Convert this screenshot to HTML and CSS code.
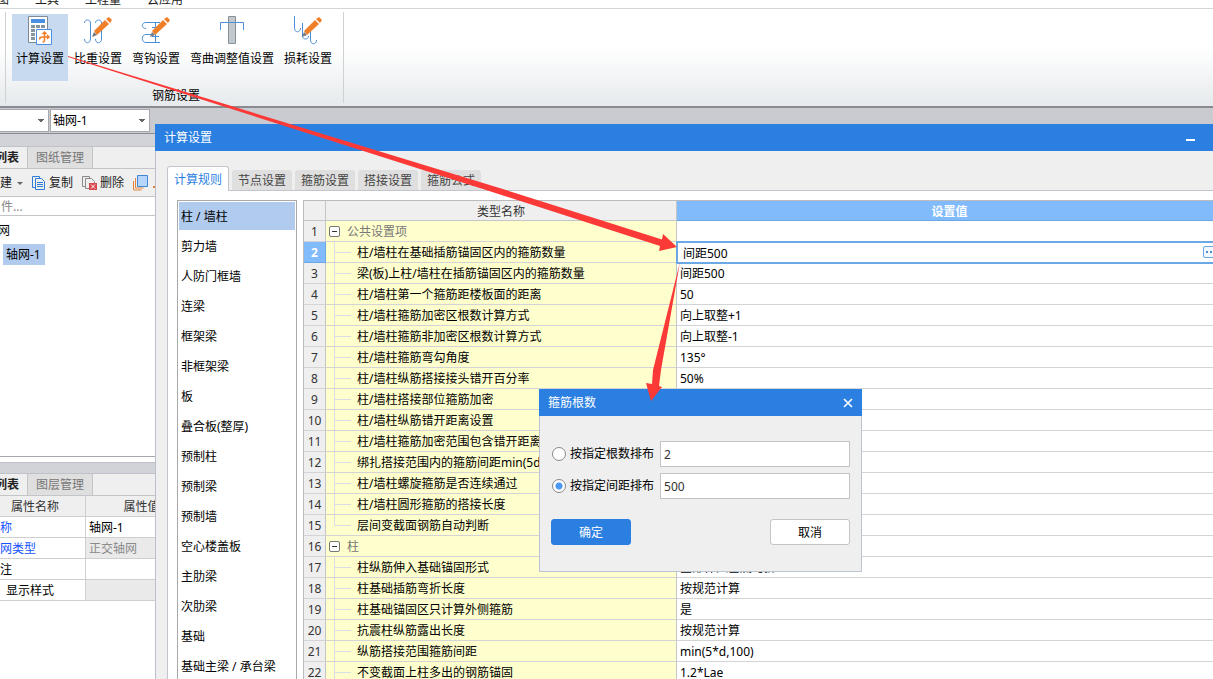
FILE: index.html
```html
<!DOCTYPE html>
<html lang="zh-CN">
<head>
<meta charset="utf-8">
<title>计算设置</title>
<link rel="stylesheet" href="styles.css">
</head>
<body>
<div class="app">
  <nav class="menu">
    <a href="#">图</a><a href="#">工具</a><a href="#">工程量</a><a href="#">云应用</a>
  </nav>
  <section class="ribbon">
    <div class="group">
      <div class="tools">
        <button class="tool active">
          <svg width="32" height="32" viewBox="0 0 32 32" fill="none">
            <path d="M4.500 2.500h19v26h-19z" fill="#fff" stroke="#7d8a94"/>
            <path d="M7 5h14v4H7z" fill="#4a90e2"/>
            <path d="M7 11h4v3H7zm5 0h4v3h-4zm5 0h4v3h-4zM7 15h4v3H7zM7 19h4v3H7zM7 23h4v3H7z" fill="#87939d"/>
            <path d="M12.500 15.500h15v15h-15z" fill="#fff" stroke="#4a90e2"/>
            <path d="M20.500 18v8q0 2-2 2M18.500 20l2-2 2 2M25 23h-7q-2.500 0-2.500 2.500M23 21l2 2-2 2" stroke="#f07f2a" stroke-width="1.500"/>
          </svg>
          <span>计算设置</span>
        </button>
        <button class="tool">
          <svg width="32" height="32" viewBox="0 0 32 32" fill="none">
            <path d="M2.500 9c0-4 6-4 6 0v16c0 5-6 5-6 0M13.500 9c0-4 6-4 6 0v16c0 5-6 5-6 0" stroke="#4a90d9"/>
            <path d="M12 17L23 6l4 4-12 11z" fill="#f07f2a"/><path d="M24 5l3-2 3 3-2 3z" fill="#f07f2a"/><path d="M10 23l2-5 3 3z" fill="#777"/>
          </svg>
          <span>比重设置</span>
        </button>
        <button class="tool">
          <svg width="32" height="32" viewBox="0 0 32 32" fill="none">
            <path d="M20 8.500H6c-5 0-5 6 0 6M20 28.500H6c-5 0-5-8 0-8h5M15.500 9v19M12 13.500h7M12 22.500h7" stroke="#4a90d9"/>
            <path d="M12 17L23 6l4 4-12 11z" fill="#f07f2a"/><path d="M24 5l3-2 3 3-2 3z" fill="#f07f2a"/><path d="M10 23l2-5 3 3z" fill="#777"/>
          </svg>
          <span>弯钩设置</span>
        </button>
        <button class="tool">
          <svg width="32" height="32" viewBox="0 0 32 32" fill="none">
            <path d="M12.500 2.500h7v27h-7z" fill="#c3c8cc" stroke="#85929b"/>
            <path d="M4.500 16V8.500h23V16" stroke="#4a90d9"/>
          </svg>
          <span>弯曲调整值设置</span>
        </button>
        <button class="tool">
          <svg width="32" height="32" viewBox="0 0 32 32" fill="none">
            <path d="M2.500 2v12c0 5 6 5 6 0M10.500 9v13c0 4 6 4 6 0M18.500 16v10c0 5 6 5 6 0" stroke="#4a90d9"/>
            <path d="M12 17L23 6l4 4-12 11z" fill="#f07f2a"/><path d="M24 5l3-2 3 3-2 3z" fill="#f07f2a"/><path d="M10 23l2-5 3 3z" fill="#777"/>
          </svg>
          <span>损耗设置</span>
        </button>
      </div>
      <div class="caption">钢筋设置</div>
    </div>
  </section>
  <div class="combos">
    <select class="combo short" aria-label="楼层"><option></option></select>
    <select class="combo" aria-label="构件"><option>轴网-1</option></select>
  </div>
  <aside class="side">
    <div class="splitter"></div>
    <div class="dock-tabs"><button class="dock on">列表</button><button class="dock">图纸管理</button></div>
    <div class="toolbar">
      <button class="new">建 <i class="caret"></i></button>
      <button><svg width="14" height="16" viewBox="0 0 14 16" fill="none" stroke="#2f7fd6"><path d="M3.500 12.500h-3V1.500h7v2M3.500 3.500h6l3 3v8h-9zM5 7.500h6M5 9.500h6M5 11.500h6"/></svg>复制</button>
      <button><svg width="15" height="16" viewBox="0 0 15 16" fill="none"><path d="M3.500 11.500h-3v-10h7v2M7 13.500H3.500v-10h6l3 3V8" stroke="#888"/><path d="M7 8h8v7H7z" fill="#d8474e"/><path d="M9 9.500l4 4m0-4l-4 4" stroke="#fff"/></svg>删除</button>
      <button aria-label="层间复制"><svg width="15" height="16" viewBox="0 0 15 16" fill="none"><path d="M.5 6v9h8M2.500 3v10h8" stroke="#e2843f"/><path d="M4.500.5h10v11h-10z" fill="#b5d5fb" stroke="#3f86d6"/></svg></button>
      <i class="dot"></i>
    </div>
    <input class="search" placeholder="件..." aria-label="搜索构件">
    <ul class="tree"><li>网</li><li><span class="picked">轴网-1</span></li></ul>
    <div class="splitter low"></div>
    <div class="dock-tabs"><button class="dock on">列表</button><button class="dock">图层管理</button></div>
    <table class="props">
      <thead><tr><th>属性名称</th><th>属性值</th></tr></thead>
      <tbody>
        <tr><td class="link">称</td><td>轴网-1</td></tr>
        <tr><td class="link">网类型</td><td class="off">正交轴网</td></tr>
        <tr><td>注</td><td></td></tr>
        <tr><td class="indent">显示样式</td><td class="off"></td></tr>
      </tbody>
    </table>
  </aside>
</div>

<section class="window">
  <header class="titlebar"><h1>计算设置</h1><button class="min" aria-label="最小化"></button></header>
  <div class="window-body">
    <div class="tabs">
      <button class="tab on">计算规则</button><button class="tab">节点设置</button><button class="tab">箍筋设置</button><button class="tab">搭接设置</button><button class="tab">箍筋公式</button>
    </div>
    <div class="panel">
      <ul class="kinds">
        <li class="on">柱 / 墙柱</li><li>剪力墙</li><li>人防门框墙</li><li>连梁</li><li>框架梁</li><li>非框架梁</li><li>板</li><li>叠合板(整厚)</li><li>预制柱</li><li>预制梁</li><li>预制墙</li><li>空心楼盖板</li><li>主肋梁</li><li>次肋梁</li><li>基础</li><li>基础主梁 / 承台梁</li>
      </ul>
      <table class="grid">
        <thead><tr><th class="num"></th><th class="name">类型名称</th><th class="value">设置值</th></tr></thead>
        <tbody>
          <tr class="head"><th>1</th><td><button class="fold" aria-label="折叠"></button>公共设置项</td><td></td></tr>
          <tr class="current"><th>2</th><td>柱/墙柱在基础插筋锚固区内的箍筋数量</td><td><div class="editor"><input value="间距500" aria-label="设置值"><button class="more" aria-label="更多"><i></i><i></i><i></i></button></div></td></tr>
          <tr><th>3</th><td>梁(板)上柱/墙柱在插筋锚固区内的箍筋数量</td><td>间距500</td></tr>
          <tr><th>4</th><td>柱/墙柱第一个箍筋距楼板面的距离</td><td>50</td></tr>
          <tr><th>5</th><td>柱/墙柱箍筋加密区根数计算方式</td><td>向上取整+1</td></tr>
          <tr><th>6</th><td>柱/墙柱箍筋非加密区根数计算方式</td><td>向上取整-1</td></tr>
          <tr><th>7</th><td>柱/墙柱箍筋弯勾角度</td><td>135°</td></tr>
          <tr><th>8</th><td>柱/墙柱纵筋搭接接头错开百分率</td><td>50%</td></tr>
          <tr><th>9</th><td>柱/墙柱搭接部位箍筋加密</td><td></td></tr>
          <tr><th>10</th><td>柱/墙柱纵筋错开距离设置</td><td></td></tr>
          <tr><th>11</th><td>柱/墙柱箍筋加密范围包含错开距离</td><td></td></tr>
          <tr><th>12</th><td>绑扎搭接范围内的箍筋间距min(5d</td><td></td></tr>
          <tr><th>13</th><td>柱/墙柱螺旋箍筋是否连续通过</td><td></td></tr>
          <tr><th>14</th><td>柱/墙柱圆形箍筋的搭接长度</td><td></td></tr>
          <tr class="last"><th>15</th><td>层间变截面钢筋自动判断</td><td></td></tr>
          <tr class="head"><th>16</th><td><button class="fold" aria-label="折叠"></button>柱</td><td></td></tr>
          <tr><th>17</th><td>柱纵筋伸入基础锚固形式</td><td>全部伸入基底弯折</td></tr>
          <tr><th>18</th><td>柱基础插筋弯折长度</td><td>按规范计算</td></tr>
          <tr><th>19</th><td>柱基础锚固区只计算外侧箍筋</td><td>是</td></tr>
          <tr><th>20</th><td>抗震柱纵筋露出长度</td><td>按规范计算</td></tr>
          <tr><th>21</th><td>纵筋搭接范围箍筋间距</td><td>min(5*d,100)</td></tr>
          <tr><th>22</th><td>不变截面上柱多出的钢筋锚固</td><td>1.2*Lae</td></tr>
        </tbody>
      </table>
    </div>
  </div>
</section>

<form class="popup">
  <header class="titlebar"><h2>箍筋根数</h2>
    <button type="button" class="close" aria-label="关闭"><svg width="10" height="10" viewBox="0 0 10 10" stroke="#fff" stroke-width="1.600"><path d="M1 1l8 8M9 1L1 9"/></svg></button>
  </header>
  <div class="fields">
    <label><input type="radio" name="mode">按指定根数排布</label><input class="text" value="2" aria-label="根数">
    <label><input type="radio" name="mode" checked>按指定间距排布</label><input class="text" value="500" aria-label="间距">
  </div>
  <footer><button type="button" class="btn primary">确定</button><button type="button" class="btn">取消</button></footer>
</form>

<svg class="arrows" width="1213" height="679" viewBox="0 0 1213 679" fill="#fb3a38">
  <path d="M68 56l438 134 156 49.500 1-5.500 14 13-18 4 1-5-174-56L68 57z"/>
  <path d="M680 262l-19 108-2 16 3 1-11 14-5-18 6 1 1-14z"/>
</svg>
</body>
</html>
```
FILE: styles.css
```css
* { box-sizing: border-box; }
body {
  margin: 0;
  min-height: 100vh;
  overflow: hidden;
  background: #fff;
  color: #000;
  font: 12px/20px "Noto Sans", "Noto Sans CJK SC", sans-serif;
}
button, input, select { font: inherit; color: inherit; margin: 0; padding: 0; border: 0; background: none; }
ul { list-style: none; margin: 0; padding: 0; }
h1, h2 { margin: 0; font-size: 12px; font-weight: 400; }
table { border-spacing: 0; table-layout: fixed; }
th { font-weight: 400; }
.app { height: 100vh; overflow: hidden; display: flex; flex-direction: column; }

/* menu and ribbon */
.menu { height: 9px; flex: none; display: flex; align-items: flex-end; gap: 26px; overflow: hidden; border-bottom: 1px solid #d5d6d8; }
.menu a { color: #222; text-decoration: none; white-space: nowrap; line-height: 16px; }
.menu a:first-child { width: 9px; display: flex; justify-content: flex-end; }
.ribbon { flex: none; height: 99px; padding: 3px 0 3px 5px; display: flex; background: linear-gradient(#fff 40%, #e6eaec); border-bottom: 2px solid #888c90; }
.group { border: 1px solid #cfd1d3; border-width: 0 1px; padding: 2px 7px 0 6px; display: flex; flex-direction: column; justify-content: space-between; }
.tools { display: flex; gap: 2px; }
.tool { height: 67px; padding: 0 4px; display: flex; flex-direction: column; align-items: center; white-space: nowrap; gap: 3px; }
.tool svg { display: block; }
.tool.active { background: #c8daf0; }
.caption { padding-left: 4px; text-align: center; line-height: 14px; }

.combos { flex: none; display: flex; gap: 1px; padding: 1px 0 2px; height: 26px; background: #c9cbd1; border-bottom: 1px solid #888c90; }
.combo {
  appearance: none;
  width: 100px;
  height: 23px;
  padding: 0 2px;
  border: 1px solid #a6a8ab;
  background-color: #fff;
  background-image: linear-gradient(#666, #666), linear-gradient(#666, #666), linear-gradient(#666, #666);
  background-size: 6px 1px, 4px 1px, 2px 1px;
  background-position: right 4px top 9px, right 5px top 10px, right 6px top 11px;
  background-repeat: no-repeat;
}
.combo.short { width: 49px; border-left: 0; }

/* docked panels */
.side { flex: 1; width: 198px; display: flex; flex-direction: column; }
.splitter { flex: none; height: 13px; background: #d1d3d9; border-bottom: 1px solid #bfc2c8; }
.splitter.low { margin-top: 5px; height: 12px; border-top: 1px solid #bfc2c8; }
.dock-tabs { flex: none; display: flex; height: 22px; background: #efefef; border-bottom: 1px solid #c4c5c9; }
.dock { padding: 1px 8px 0; background: #dfdfdf; color: #777; border-right: 1px solid #c4c5c9; white-space: nowrap; }
.dock.on { width: 28px; background: #efefef; color: #222; font-weight: 700; display: flex; justify-content: flex-end; align-items: center; }
.toolbar { flex: none; height: 28px; padding-top: 1px; display: flex; align-items: center; gap: 9px; background: #efefef; border-bottom: 1px solid #c4c5c9; color: #222; }
.toolbar button { display: flex; align-items: center; gap: 3px; white-space: nowrap; }
.caret { border: 3px solid transparent; border-top-color: #666; border-bottom: 0; margin-left: 2px; }
.dot { width: 2px; height: 2px; margin: 8px 0 0 -4px; background: #e2843f; }
.search { flex: none; height: 19px; padding: 1px 1px 0; border-bottom: 1px solid #c4c5c9; }
.search::placeholder { color: #888; opacity: 1; }
.tree { flex: none; height: 241px; padding: 2px 3px; border-bottom: 1px solid #aaa; }
.tree li { height: 24px; line-height: 26px; }
.tree li:first-child { margin-left: -5px; }
.picked { display: inline-block; line-height: 21px; padding: 0 4px 0 3px; background: #b0cbed; }
.props { width: 198px; }
.props th, .props td { height: 21px; padding: 2px 0 0; line-height: 18px; border-bottom: 1px solid #cfcfcf; border-right: 1px solid #cfcfcf; }
.props th { background: #efefef; color: #333; }
.props th:first-child { width: 86px; padding-right: 26px; text-align: right; }
.props td + td { padding-left: 3px; }
.props .link { color: #1553ff; }
.props .off { background: #eaeaea; color: #8b8b8b; }
.props .indent { padding-left: 6px; }

/* settings window */
.window { position: absolute; left: 155px; top: 124px; right: -10px; bottom: 0; display: flex; flex-direction: column; overflow: hidden; background: #efefef; }
.titlebar { flex: none; height: 27px; display: flex; align-items: center; justify-content: space-between; padding: 0 9px; background: #2b7fe1; color: #fff; }
.min { width: 9px; height: 2px; margin: 4px 19px 0 0; background: #fff; }
.window-body { flex: 1; min-height: 0; display: flex; flex-direction: column; padding: 15px 0 0 11px; border-left: 1px solid #b9c0cb; }
.tabs { flex: none; display: flex; align-items: flex-end; gap: 3px; height: 25px; position: relative; z-index: 1; }
.tab { height: 20px; padding: 2px 6px 0; margin-bottom: 1px; background: #dfdfdf; border-radius: 3px 3px 0 0; color: #444; line-height: 18px; white-space: nowrap; }
.tab.on { height: 25px; margin: 0; background: #fff; border: 1px solid #c4c5cc; border-bottom: 0; color: #2b7fe1; }
.panel { flex: 1; min-height: 0; margin-top: -1px; display: flex; align-items: flex-start; gap: 6px; padding: 9px 0 0 9px; background: #fff; border: 1px solid #c4c5cc; border-width: 1px 0 0 1px; }
.kinds { flex: none; width: 120px; min-height: 100%; padding: 1px; border: 1px solid #a9a9a9; }
.kinds li { height: 28px; margin-bottom: 2px; padding-left: 2px; line-height: 30px; white-space: nowrap; }
.kinds .on { background: #b0cbed; }
.grid { flex: 1; min-width: 0; width: 100%; border-top: 1px solid #bbb; border-left: 1px solid #bbb; }
.grid th, .grid td { height: 21px; padding: 2px 0 0; line-height: 18px; white-space: nowrap; border-right: 1px solid #c4c5c9; border-bottom: 1px solid #d4d4d6; }
.grid th { background: #efefef; color: #333; }
.grid thead th { height: 20px; line-height: 17px; border-bottom-color: #c4c5c9; }
.grid .num { width: 22px; }
.grid .name { width: 351px; }
.grid thead .value { background: #82bbfb; color: #fff; font-weight: 700; border-bottom-color: #6aa9e6; }
.grid td:nth-child(2) {
  padding-left: 31px;
  background: linear-gradient(#dcdce4, #dcdce4) 8px 0 / 1px 100% no-repeat, linear-gradient(#dcdce4, #dcdce4) 8px 10px / 17px 1px no-repeat, #ffffcd;
}
.grid .last td:nth-child(2) { background-size: 1px 10px, 17px 1px, auto; }
.grid .head td:nth-child(2) { padding-left: 3px; background: #ffffcd; color: #777; }
.grid td:nth-child(3) { padding-left: 3px; }
.fold { width: 11px; height: 11px; margin-right: 7px; border: 1px solid #777; border-radius: 2px; background: linear-gradient(#333, #333) center / 5px 1px no-repeat, #fff; vertical-align: 0; }
.grid .current th { background: #82bbfb; color: #fff; font-weight: 700; border-color: #6aa9e6; }
.grid .current td:nth-child(3) { padding: 0; outline: 2px solid #6aa9e6; outline-offset: -1px; background: #fff; }
.editor { display: flex; align-items: center; height: 20px; padding-left: 6px; }
.editor input { flex: 1; min-width: 0; height: 20px; padding-top: 2px; }
.more { width: 19px; height: 12px; display: flex; align-items: center; padding-left: 2px; gap: 2px; border: 1px solid #6aa9e6; border-radius: 2px; background: #f2f7fd; }
.more i { width: 2px; height: 2px; background: #4a90d9; }

/* stirrup count popup */
.popup { position: absolute; left: 539px; top: 389px; width: 323px; background: #efefef; border: 1px solid #bcc4d2; border-top: 0; }
.popup .titlebar { margin: 0 -1px; }
.close { display: flex; }
.fields { display: grid; grid-template-columns: auto 1fr; gap: 6px; padding: 25px 11px 20px 12px; }
.fields label { display: flex; align-items: center; gap: 4px; white-space: nowrap; }
.fields [type=radio] { appearance: none; width: 14px; height: 14px; border: 1px solid #888; border-radius: 50%; background: #fff; }
.fields [type=radio]:checked { background: radial-gradient(circle, #4a9af5 3px, #fff 4px); }
.text { min-width: 0; height: 26px; padding: 1px 3px 0; border: 1px solid #c2c4ca; background: #fff; color: #333; }
.popup footer { display: flex; justify-content: space-between; padding: 0 11px 26px; }
.btn { width: 80px; height: 26px; padding-top: 1px; border: 1px solid #c4c4c8; border-radius: 3px; background: #fff; }
.btn.primary { background: #2b7fe1; border-color: #2b7fe1; color: #fff; }
.arrows { position: absolute; left: 0; top: 0; z-index: 2; pointer-events: none; }
```
